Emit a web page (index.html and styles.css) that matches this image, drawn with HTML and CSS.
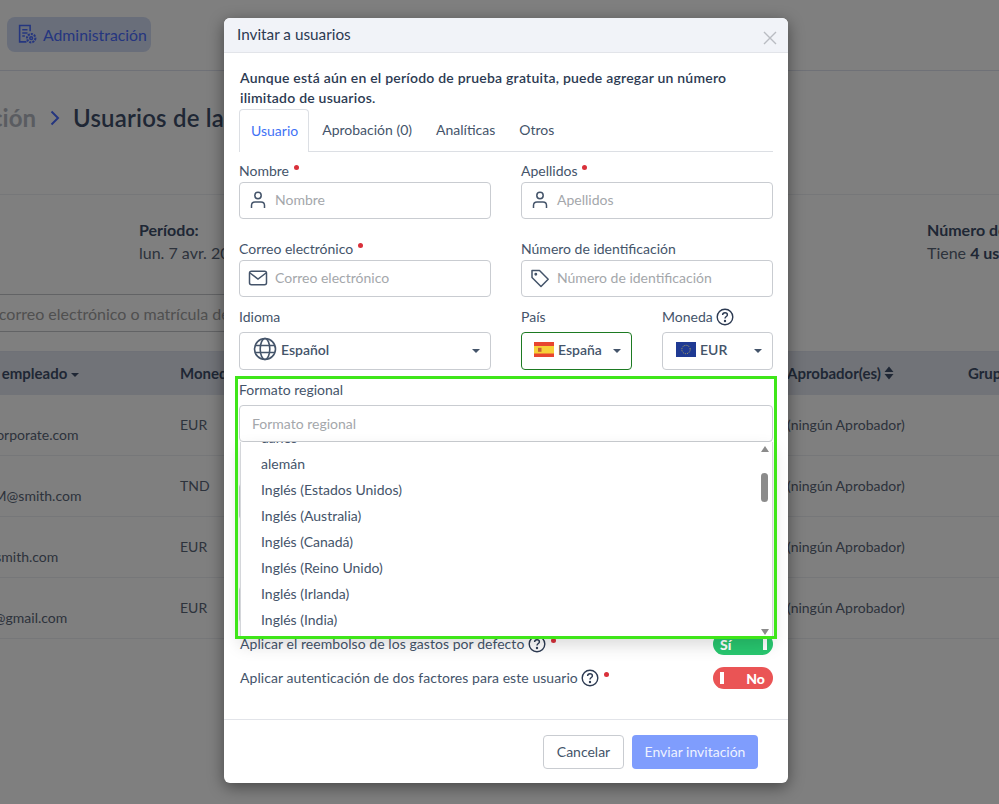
FILE: index.html
```html
<!DOCTYPE html>
<html lang="es">
<head>
    <meta charset="UTF-8">
    <meta name="viewport" content="width=device-width, initial-scale=1.0">
    <title>Invitar a usuarios</title>
    <link rel="stylesheet" href="styles.css">
</head>

<body>
    <div class="page">
        <header class="topbar">
            <a class="admin-pill">
                <svg width="21" height="21" viewBox="0 0 20 20" fill="none" stroke="currentColor" stroke-width="1.5">
                    <path d="M9 17H2.5V1.5H12.5V7"/>
                    <path d="M5 5.5H10M5 8.5H10M5 11.5H7.5"/>
                    <circle cx="13.5" cy="13.5" r="4" stroke-width="2" stroke-dasharray="2 1"/>
                    <circle cx="13.5" cy="13.5" r="1.3"/>
                </svg>
                Administración
            </a>
        </header>

        <div class="title-row">
            <span class="crumb">Administración</span>
            <svg class="crumb-sep" width="10" height="16" viewBox="0 0 10 16" fill="none" stroke="currentColor" stroke-width="2"><path d="M1.5 1.5L8 8L1.5 14.5"/></svg>
            <h1>Usuarios de la empresa</h1>
        </div>

        <div class="summary">
            <div>
                <strong>Período:</strong>
                <p>lun. 7 avr. 2025</p>
            </div>
            <div>
                <strong>Número de usuarios:</strong>
                <p>Tiene <b>4 usuarios</b></p>
            </div>
        </div>

        <div class="search">Nombre, correo electrónico o matrícula de empleado</div>

        <div class="table-row table-head">
            <div class="name-head">Nombre del empleado <i class="caret"></i></div>
            <div>Moneda</div>
            <div>Aprobador(es)
                <svg width="10" height="14" viewBox="0 0 10 14" fill="currentColor"><path d="M5 0.5L9.5 6H0.5ZM5 13.5L0.5 8H9.5Z"/></svg>
            </div>
            <div>Grupo</div>
        </div>
        <div class="table-row">
            <div class="email">abr@corporate.com</div>
            <div>EUR</div>
            <div>(ningún Aprobador)</div>
            <div></div>
        </div>
        <div class="table-row">
            <div class="email">pedroM@smith.com</div>
            <div>TND</div>
            <div>(ningún Aprobador)</div>
            <div></div>
        </div>
        <div class="table-row">
            <div class="email">jean@smith.com</div>
            <div>EUR</div>
            <div>(ningún Aprobador)</div>
            <div></div>
        </div>
        <div class="table-row">
            <div class="email">pedro@gmail.com</div>
            <div>EUR</div>
            <div>(ningún Aprobador)</div>
            <div></div>
        </div>
    </div>

    <div class="overlay"></div>

    <div class="modal">
        <div class="modal-head">
            <h2>Invitar a usuarios</h2>
            <svg class="close" width="14" height="14" viewBox="0 0 14 14" stroke="currentColor" stroke-width="1.4"><path d="M1 1L13 13M13 1L1 13"/></svg>
        </div>

        <div class="modal-body">
            <p class="intro">Aunque está aún en el período de prueba gratuita, puede agregar un número ilimitado de usuarios.</p>

            <div class="tabs">
                <span class="tab active">Usuario</span>
                <span class="tab">Aprobación (0)</span>
                <span class="tab">Analíticas</span>
                <span class="tab">Otros</span>
            </div>

            <div class="form-grid">
                <div class="field">
                    <label>Nombre <i class="req"></i></label>
                    <div class="input">
                        <svg width="20" height="20" viewBox="0 0 20 20" fill="none" stroke="currentColor" stroke-width="1.5"><circle cx="10" cy="5.5" r="3.2"/><path d="M3.5 18V15.5C3.5 13.5 5 12 7 12H13C15 12 16.5 13.5 16.5 15.5V18"/></svg>
                        <span>Nombre</span>
                    </div>
                </div>
                <div class="field">
                    <label>Apellidos <i class="req"></i></label>
                    <div class="input">
                        <svg width="20" height="20" viewBox="0 0 20 20" fill="none" stroke="currentColor" stroke-width="1.5"><circle cx="10" cy="5.5" r="3.2"/><path d="M3.5 18V15.5C3.5 13.5 5 12 7 12H13C15 12 16.5 13.5 16.5 15.5V18"/></svg>
                        <span>Apellidos</span>
                    </div>
                </div>
                <div class="field">
                    <label>Correo electrónico <i class="req"></i></label>
                    <div class="input">
                        <svg width="20" height="20" viewBox="0 0 20 20" fill="none" stroke="currentColor" stroke-width="1.5"><rect x="1.5" y="3.2" width="17" height="13.6" rx="2"/><path d="M2 5L10 11L18 5"/></svg>
                        <span>Correo electrónico</span>
                    </div>
                </div>
                <div class="field">
                    <label>Número de identificación</label>
                    <div class="input">
                        <svg width="20" height="20" viewBox="0 0 20 20" fill="none" stroke="currentColor" stroke-width="1.5" stroke-linejoin="round"><path d="M2 2.5H9.5L18.2 11.2L11 18.5L2 9.5Z"/><circle cx="5.8" cy="6.2" r="0.7"/></svg>
                        <span>Número de identificación</span>
                    </div>
                </div>
            </div>

            <div class="select-row">
                <div class="field">
                    <label>Idioma</label>
                    <div class="select">
                        <svg width="24" height="24" viewBox="0 0 24 24" fill="none" stroke="currentColor" stroke-width="1.6"><circle cx="12" cy="12" r="10.5"/><ellipse cx="12" cy="12" rx="4.8" ry="10.5"/><path d="M2 8.5H22M2 15.5H22"/></svg>
                        <b>Español</b>
                        <i class="caret"></i>
                    </div>
                </div>
                <div class="field">
                    <label>País</label>
                    <div class="select selected">
                        <svg width="20" height="15" viewBox="0 0 20 15"><rect width="20" height="15" fill="#e8452f"/><rect y="4" width="20" height="7.5" fill="#f7d038"/><rect x="4" y="5.8" width="3.5" height="4" fill="#c8602f"/></svg>
                        <b>España</b>
                        <i class="caret"></i>
                    </div>
                </div>
                <div class="field">
                    <label>Moneda
                        <svg class="help" width="18" height="18" viewBox="0 0 18 18" fill="none" stroke="currentColor" stroke-width="1.4"><circle cx="9" cy="9" r="7.8"/><path d="M6.6 7C6.6 5.6 7.7 4.8 9 4.8C10.4 4.8 11.4 5.7 11.4 6.9C11.4 8.5 9 8.6 9 10.6"/><circle cx="9" cy="13" r="0.5"/></svg>
                    </label>
                    <div class="select currency">
                        <svg width="20" height="15" viewBox="0 0 20 15"><rect width="20" height="15" fill="#1f3a93"/><circle cx="10" cy="7.5" r="4.2" fill="none" stroke="#e0c84a" stroke-width="0.8" stroke-dasharray="1 1.2"/></svg>
                        <b>EUR</b>
                        <i class="caret"></i>
                    </div>
                </div>
            </div>

            <div class="field regional">
                <label>Formato regional</label>
                <div class="input plain"><span>Formato regional</span></div>
                <div class="dropdown">
                    <ul>
                        <li>danés</li>
                        <li>alemán</li>
                        <li>Inglés (Estados Unidos)</li>
                        <li>Inglés (Australia)</li>
                        <li>Inglés (Canadá)</li>
                        <li>Inglés (Reino Unido)</li>
                        <li>Inglés (Irlanda)</li>
                        <li>Inglés (India)</li>
                    </ul>
                    <div class="scrollbar">
                        <i class="arrow-up"></i>
                        <i class="thumb"></i>
                        <i class="arrow-down"></i>
                    </div>
                </div>
            </div>

            <!-- campos tapados por el desplegable -->
            <div class="covered">
                <div class="input"></div>
                <div class="input"></div>
            </div>

            <div class="toggle-row">
                <span>Aplicar el reembolso de los gastos por defecto
                    <svg class="help" width="18" height="18" viewBox="0 0 18 18" fill="none" stroke="currentColor" stroke-width="1.4"><circle cx="9" cy="9" r="7.8"/><path d="M6.6 7C6.6 5.6 7.7 4.8 9 4.8C10.4 4.8 11.4 5.7 11.4 6.9C11.4 8.5 9 8.6 9 10.6"/><circle cx="9" cy="13" r="0.5"/></svg>
                    <i class="req"></i></span>
                <div class="toggle on"><b>Sí</b><i></i></div>
            </div>
            <div class="toggle-row">
                <span>Aplicar autenticación de dos factores para este usuario
                    <svg class="help" width="18" height="18" viewBox="0 0 18 18" fill="none" stroke="currentColor" stroke-width="1.4"><circle cx="9" cy="9" r="7.8"/><path d="M6.6 7C6.6 5.6 7.7 4.8 9 4.8C10.4 4.8 11.4 5.7 11.4 6.9C11.4 8.5 9 8.6 9 10.6"/><circle cx="9" cy="13" r="0.5"/></svg>
                    <i class="req"></i></span>
                <div class="toggle off"><i></i><b>No</b></div>
            </div>
        </div>

        <div class="modal-foot">
            <button class="btn-cancel">Cancelar</button>
            <button class="btn-send">Enviar invitación</button>
        </div>

        <div class="highlight"></div>
    </div>
</body>
</html>
```

FILE: styles.css
```css
* {
    box-sizing: border-box;
}

body {
    margin: 0;
    height: 804px;
    overflow: hidden;
    position: relative;
    background: #fff;
    font-family: Lato, "Open Sans", sans-serif;
    font-size: 14px;
    color: #44546a;
}

.page {
    margin-left: -100px;
    width: 1500px;
    color: #5a6678;
}

.topbar {
    height: 71px;
    padding: 17px 0 0 107px;
    border-bottom: 1px solid #dfe3ee;
}

.admin-pill {
    display: inline-flex;
    align-items: center;
    gap: 5px;
    width: 144px;
    height: 35px;
    padding-left: 10px;
    border-radius: 8px;
    background: #d2dcf5;
    color: #4a6cff;
    font-size: 15.8px;
}

.title-row {
    display: flex;
    align-items: center;
    gap: 14px;
    height: 124px;
    padding-bottom: 30px;
    border-bottom: 1px solid #eceef2;
}

.crumb {
    flex: none;
    display: flex;
    justify-content: flex-end;
    width: 136px;
    white-space: nowrap;
    font-size: 24px;
    font-weight: 700;
    color: #b5b9c2;
}

.crumb-sep {
    flex: none;
    color: #4a6cff;
}

.title-row h1 {
    margin: 0 0 0 -1px;
    font-size: 24px;
    font-weight: 600;
    letter-spacing: 0.2px;
    color: #3f4f6b;
}

.summary {
    display: grid;
    grid-template-columns: 788px 400px;
    height: 99px;
    padding: 25px 0 0 239px;
    font-size: 16px;
}

.summary strong {
    color: #3f4f6b;
}

.summary p {
    margin: 4px 0 0;
}

.summary b {
    color: #3f4f6b;
}

.search {
    width: 800px;
    height: 38px;
    padding-left: 34px;
    border-top: 1px solid #c4c6ca;
    border-bottom: 1px solid #c4c6ca;
    line-height: 38px;
    font-size: 16px;
    color: #a0a0a0;
}

.table-row {
    display: grid;
    grid-template-columns: 280px 607px 181px 400px;
    height: 61px;
    padding-top: 21px;
    border-bottom: 1px solid #eceef2;
}

.table-head {
    height: 44px;
    margin-top: 19px;
    padding-top: 12px;
    border-top: 1px solid #dfe3ee;
    border-bottom: 0;
    background: #e3e7f0;
    font-size: 15px;
    font-weight: 700;
    color: #3f4f6b;
}

.name-head {
    white-space: nowrap;
    text-align: right;
    width: 179px;
}

.table-head svg {
    vertical-align: -1px;
}

.email {
    padding: 10px 0 0 58px;
    white-space: nowrap;
}

.caret {
    display: inline-block;
    width: 0;
    height: 0;
    border-left: 4.5px solid transparent;
    border-right: 4.5px solid transparent;
    border-top: 4.5px solid currentColor;
    vertical-align: middle;
}

.overlay {
    position: absolute;
    inset: 0;
    background: rgba(0, 0, 0, 0.5);
}

.modal {
    position: absolute;
    left: 224px;
    top: 18px;
    width: 564px;
    height: 765px;
    display: flex;
    flex-direction: column;
    background: #fff;
    border-radius: 6px;
    box-shadow: 0 4px 16px rgba(0, 0, 0, 0.45);
}

.modal-head {
    display: flex;
    justify-content: space-between;
    align-items: center;
    height: 35px;
    padding: 0 11px 2px 13px;
    border-bottom: 1px solid #e2e4e9;
    border-radius: 6px 6px 0 0;
    background: #f1f3f8;
}

.modal-head h2 {
    margin: 0;
    font-size: 15.3px;
    font-weight: 400;
    color: #2c3a52;
}

.close {
    margin-top: 8px;
    color: #b9bcc2;
}

.modal-body {
    flex: 1;
    padding: 15px 15px 0;
}

.intro {
    margin: 0;
    padding-left: 1px;
    font-size: 14px;
    font-weight: 600;
    line-height: 20px;
    letter-spacing: 0.22px;
    color: #2c3a52;
}

.tabs {
    display: flex;
    height: 43px;
    margin-top: 1px;
    border-bottom: 1px solid #dcdfe4;
}

.tab {
    padding: 12px 12px 0;
}

.tab.active {
    height: 43px;
    margin-right: 1px;
    padding: 12px 10px 0 11px;
    border: 1px solid #dcdfe4;
    border-bottom: 0;
    border-radius: 4px 4px 0 0;
    background: #fff;
    color: #3f72f5;
}

.form-grid {
    display: grid;
    grid-template-columns: 252px 252px;
    column-gap: 30px;
    row-gap: 20px;
    margin-top: 9px;
}

.field label {
    display: block;
    height: 19px;
    line-height: 19px;
    margin-bottom: 2px;
}

.req {
    display: inline-block;
    width: 5px;
    height: 5px;
    margin-left: 1px;
    border-radius: 50%;
    background: #d9303a;
    vertical-align: 6px;
}

.input {
    display: flex;
    align-items: center;
    gap: 7px;
    height: 37px;
    padding: 0 0 2px 8px;
    border: 1px solid #c9ccd1;
    border-radius: 4px;
}

.input span {
    color: #a4a7ab;
}

.input.plain {
    padding: 0 0 0 12px;
}

.select-row {
    display: grid;
    grid-template-columns: 252px 111px 111px;
    column-gap: 30px;
    margin-top: 10px;
}

.select-row label {
    margin-bottom: 6px;
}

.select {
    display: flex;
    align-items: center;
    gap: 4px;
    height: 38px;
    padding: 0 10px 4px 13px;
    border: 1px solid #c9ccd1;
    border-radius: 4px;
}

.select b {
    font-weight: 600;
}

.select .caret {
    margin-left: auto;
    margin-top: 3px;
}

.select.selected {
    border-color: #1d7a22;
    padding-left: 12px;
}

.select.currency {
    margin-top: 1px;
}

.help {
    vertical-align: -4px;
    color: #2c3a52;
}

.regional {
    position: relative;
    margin-top: 10px;
}

.regional label {
    margin-bottom: 6px;
}

.dropdown {
    position: absolute;
    left: 1px;
    right: 0;
    top: 62px;
    height: 195px;
    overflow: hidden;
    background: #fff;
    border: 1px solid #d4d6da;
    border-top: 0;
    box-shadow: 0 8px 16px rgba(0, 0, 0, 0.15);
}

.dropdown ul {
    margin: -17px 0 0;
    padding: 0 0 0 20px;
    list-style: none;
}

.dropdown li {
    height: 26px;
    line-height: 26px;
}

.scrollbar {
    position: absolute;
    top: 0;
    right: 0;
    bottom: 0;
    width: 12px;
    background: #fff;
}

.scrollbar i {
    position: absolute;
    left: 1px;
}

.arrow-up {
    top: 4px;
    border-left: 4.5px solid transparent;
    border-right: 4.5px solid transparent;
    border-bottom: 6px solid #8b8b8b;
}

.arrow-down {
    bottom: 1px;
    border-left: 4.5px solid transparent;
    border-right: 4.5px solid transparent;
    border-top: 6px solid #8b8b8b;
}

.thumb {
    top: 31px;
    width: 7px;
    height: 29px;
    border-radius: 4px;
    background: #8b8b8b;
}

.covered {
    display: flex;
    flex-direction: column;
    gap: 66px;
    margin-top: 41px;
    margin-bottom: 10px;
}

.toggle-row {
    display: flex;
    justify-content: space-between;
    align-items: center;
    height: 22px;
    margin-bottom: 12px;
    padding-left: 1px;
    letter-spacing: 0.06px;
}

.toggle {
    display: flex;
    justify-content: space-between;
    align-items: center;
    width: 60px;
    height: 22px;
    padding: 0 6px 0 7px;
    border-radius: 11px;
    color: #fff;
    font-weight: 700;
}

.toggle i {
    width: 4px;
    height: 12px;
    background: #fff;
}

.toggle.on {
    background: #28c76f;
}

.toggle.off {
    padding-right: 8px;
    background: #ea5455;
}

.modal-foot {
    display: flex;
    justify-content: flex-end;
    align-items: center;
    gap: 8px;
    height: 64px;
    padding: 0 30px 0 0;
    border-top: 1px solid #e2e4e9;
}

.modal-foot button {
    height: 34px;
    border-radius: 4px;
    font-family: inherit;
    font-size: 14px;
}

.btn-cancel {
    width: 81px;
    border: 1px solid #c9ccd1;
    background: #fff;
    color: #44546a;
}

.btn-send {
    width: 126px;
    border: 0;
    background: #7f9dfd;
    color: #eef2ff;
}

.highlight {
    position: absolute;
    left: 11px;
    top: 358px;
    width: 542px;
    height: 263px;
    border: 3px solid #3fe619;
    pointer-events: none;
}
```
